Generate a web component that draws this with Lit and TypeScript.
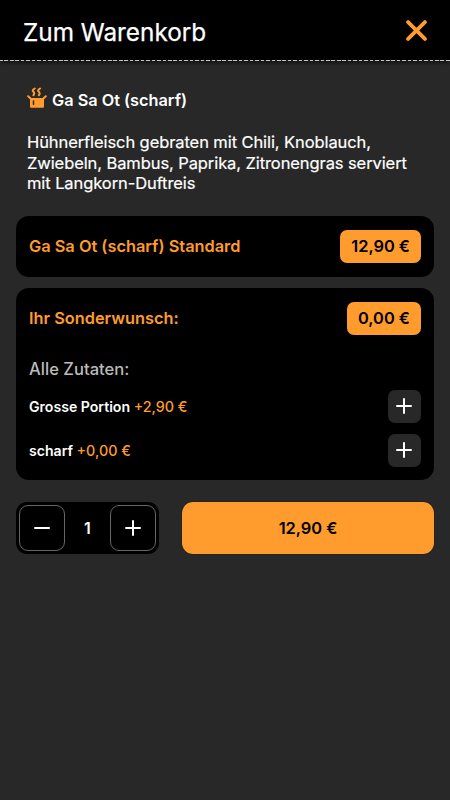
import { LitElement, html, css, svg } from "lit";
import { customElement, state } from "lit/decorators.js";

const plus = (size: number, w: number) => html`<svg width=${size} height=${size} viewBox="0 0 16 16" fill="none" stroke="#fff" stroke-width=${w} stroke-linecap="round">${svg`<path d="M1 8H15M8 1V15"/>`}</svg>`;
const minus = html`<svg width="16" height="16" viewBox="0 0 16 16" fill="none" stroke="#fff" stroke-width="2" stroke-linecap="round"><path d="M1 8H15"/></svg>`;

@customElement("app-root")
export class AppRoot extends LitElement {
  @state() private count = 1;

  private extras = [
    { name: "Grosse Portion", price: "+2,90 €" },
    { name: "scharf", price: "+0,00 €" },
  ];

  static styles = css`
    :host {
      display: block;
      height: 800px;
      background: #282828;
      color: #fff;
      font-family: Inter, sans-serif;
      overflow: hidden;
    }
    * { box-sizing: border-box; }
    svg { display: block; flex: none; }
    button { font: inherit; color: inherit; padding: 0; border: 0; background: none; }
    header {
      height: 61px;
      display: flex;
      align-items: center;
      justify-content: space-between;
      padding: 0 23px;
      background: #000;
      box-shadow: 0 1px 5px rgba(0, 0, 0, 0.8);
    }
    .title { font-size: 24.3px; line-height: 30px; padding-top: 3px; -webkit-text-stroke: 0.25px #fff; white-space: nowrap; }
    .rule { display: block; height: 1px; margin-top: -1px; position: relative;
      background: repeating-linear-gradient(90deg, #c4c4c4 0 3.6px, #222 3.6px 5.45px) -1px 0; }
    .intro { padding: 26px 27px 0; height: 155px; }
    .name { display: flex; align-items: center; gap: 5px; height: 25px; font-size: 16.3px; font-weight: 600; white-space: nowrap; }
    .name span { padding-top: 1px; }
    .name svg { margin-top: -4px; }
    .desc { margin-top: 20px; font-size: 16.5px; line-height: 20.7px; letter-spacing: -0.09px; -webkit-text-stroke: 0.2px #fff; white-space: nowrap; }
    .panel { margin: 0 16px 11px; padding: 14px 13px; border-radius: 13px; background: #000; }
    .single { height: 61px; }
    .wish { height: 192px; }
    .row { display: flex; align-items: center; justify-content: space-between; height: 33px; white-space: nowrap; }
    .label { color: #ff9c2d; font-size: 16.35px; font-weight: 600; padding-bottom: 1px; }
    .badge { height: 33px; padding: 0 11px; border-radius: 7px; background: #ff9c2d; color: #000; font-size: 16.4px; font-weight: 600; line-height: 33px; }
    .sub { margin: 22px 0 11px; height: 22px; line-height: 24px; color: #bbb; font-size: 16.6px; font-weight: 500; white-space: nowrap; }
    .extra { font-size: 14.1px; font-weight: 600; }
    .extra + .extra { margin-top: 11px; }
    .price { color: #ff9c2d; font-weight: 500; font-size: 14.3px; }
    .add { width: 33px; height: 33px; border-radius: 7px; background: #282828; display: flex; align-items: flex-start; padding: 8px; }
    .actions { display: flex; justify-content: space-between; margin: 22px 16px 0; height: 52px; }
    .stepper { width: 143px; display: flex; align-items: center; justify-content: space-between; padding: 3px; border-radius: 11px; background: #000; font-size: 16px; font-weight: 600; }
    .step { width: 46px; height: 46px; display: grid; place-items: center; border: 1px solid #666; border-radius: 9px; }
    .order { width: 252px; border-radius: 11px; background: #ff9c2d; color: #000; font-size: 16.4px; font-weight: 600; box-shadow: 0 0 1px #001; }
  `;

  render() {
    return html`
      <header>
        <span class="title">Zum Warenkorb</span>
        <svg width="21" height="21" viewBox="0 0 21 21" fill="none" stroke="#ff9c2d" stroke-width="3.8" stroke-linecap="round"><path d="M2.1 2.1L18.9 18.9M18.9 2.1L2.1 18.9"/></svg>
      </header>
      <div class="rule"></div>
      <section class="intro">
        <div class="name">
          <svg width="20" height="21" viewBox="0 0 20 21" fill="none" stroke="#ff9c2d" stroke-width="2" stroke-linecap="round" stroke-linejoin="round">
            <path d="M7.7 1.5Q4.7 3.2 6.4 4.8Q8.1 6.4 6.4 8.2M13.1 1.5Q10.1 3.2 11.8 4.8Q13.5 6.4 11.8 8.2M1.2 9.3L3.8 11.8M18.8 9.3L16.2 11.8"/>
            <path d="M3 10.9H17V19.6Q17 20.8 16 20.8H4Q3 20.8 3 19.6Z" fill="#ff9c2d" stroke="none"/>
            <path d="M6.5 14V17.3" stroke="#282828" stroke-width="1.5"/>
          </svg>
          <span>Ga Sa Ot (scharf)</span>
        </div>
        <div class="desc">
          Hühnerfleisch gebraten mit Chili, Knoblauch,<br />Zwiebeln, Bambus, Paprika, Zitronengras serviert<br />mit Langkorn-Duftreis
        </div>
      </section>
      <section class="panel single">
        <div class="row"><span class="label">Ga Sa Ot (scharf) Standard</span><span class="badge">12,90 €</span></div>
      </section>
      <section class="panel wish">
        <div class="row"><span class="label">Ihr Sonderwunsch:</span><span class="badge">0,00 €</span></div>
        <div class="sub">Alle Zutaten:</div>
        ${this.extras.map(
          (e) => html`<div class="row extra">
            <span>${e.name} <span class="price">${e.price}</span></span>
            <button class="add" aria-label="Hinzufügen">${plus(16, 2)}</button>
          </div>`
        )}
      </section>
      <section class="actions">
        <div class="stepper">
          <button class="step" aria-label="Weniger" @click=${() => (this.count = Math.max(1, this.count - 1))}>${minus}</button>
          <span>${this.count}</span>
          <button class="step" aria-label="Mehr" @click=${() => this.count++}>${plus(16, 2)}</button>
        </div>
        <button class="order">12,90 €</button>
      </section>
    `;
  }
}
